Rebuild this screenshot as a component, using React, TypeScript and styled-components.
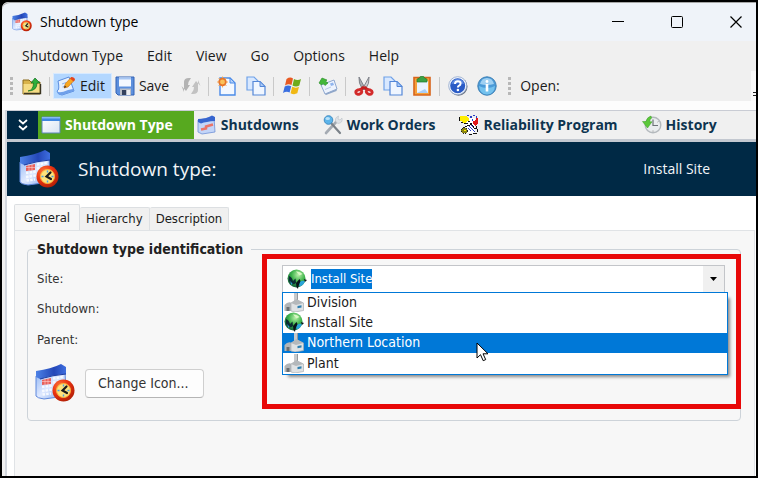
import React, { useEffect, useRef, useState } from "react";
import styled, { createGlobalStyle, css } from "styled-components";

const UI = `"Open Sans", "Noto Sans", sans-serif`;
const FORM = `"DejaVu Sans Condensed", "DejaVu Sans", sans-serif`;
const NAVY = "#002945";
const BLUE = "#0078d7";

const Global = createGlobalStyle`
  * { box-sizing: border-box; }
  body { margin: 0; background: #000; font: 14px/20px ${UI}; color: #1b1b1b; }
  button, input { font: inherit; color: inherit; }
  svg { display: block; flex: none; }
`;

/* ---------- icons ---------- */

type IconProps = { size?: number };

const CalendarClock = ({ size = 20 }: IconProps) => (
  <svg width={size} height={size} viewBox="0 0 40 40" aria-hidden="true">
    <defs>
      <linearGradient id="ccTop" x1="0" y1="0" x2="1" y2="0">
        <stop offset="0" stopColor="#4d82e6" />
        <stop offset="0.6" stopColor="#2447b8" />
        <stop offset="1" stopColor="#3f6fe0" />
      </linearGradient>
      <linearGradient id="ccPage" x1="0" y1="0" x2="1" y2="1">
        <stop offset="0" stopColor="#8fb4f2" />
        <stop offset="0.5" stopColor="#dfe9ff" />
        <stop offset="1" stopColor="#7ba4ec" />
      </linearGradient>
      <radialGradient id="ccRing" cx="0.35" cy="0.3" r="0.8">
        <stop offset="0" stopColor="#ff7a3c" />
        <stop offset="0.5" stopColor="#ea3210" />
        <stop offset="1" stopColor="#a81c04" />
      </radialGradient>
    </defs>
    <path d="M1 13 L30 8 L31 33 L9 36 Q2 35 1 33Z" fill="url(#ccPage)" stroke="#5f88dc" strokeWidth="1" />
    <path d="M1 8 Q16 6 26 1 L31 4 L31 11 Q16 12 5 16 L1 14Z" fill="url(#ccTop)" />
    <path d="M5 16 Q18 12 31 11" fill="none" stroke="#1c3ba0" strokeWidth="1" />
    <path d="M7 17 L16 15 L16 21 L7 22Z" fill="#e8605a" />
    <path d="M7 24 L18 22.500 M7 28 L17 26.500 M18 15.500 L28 14 M18 19.500 L28 18 M7.500 31.500 L16 30.500" stroke="#f6f9ff" strokeWidth="2.400" strokeDasharray="2.500 1.200" />
    <path d="M10 15 V22 M13 15 V22 M7 18.500 H16" stroke="#ffd2cf" strokeWidth="0.600" />
    <circle cx="28.500" cy="27.500" r="11" fill="url(#ccRing)" />
    <circle cx="28.500" cy="27.500" r="7" fill="#fde27c" stroke="#f9b23c" strokeWidth="1" />
    <path d="M28.500 21.500v2M28.500 31.500v2M22.500 27.500h2M32.500 27.500h2" stroke="#4a9ee0" strokeWidth="1.400" />
    <path d="M31.500 23.500 L27.500 27.500 L32 30" fill="none" stroke="#1a1a1a" strokeWidth="2.200" strokeLinecap="round" />
  </svg>
);

const FolderUp = () => (
  <svg width="20" height="20" viewBox="0 0 20 20" aria-hidden="true">
    <path d="M1 4h6l2 2h9v12H1z" fill="#d9b34a" stroke="#8a6a1c" />
    <path d="M1.500 8h16v9.500h-16z" fill="#f5dc84" />
    <path d="M2 17.500h16.500V8" fill="none" stroke="#3a3420" strokeWidth="1.400" />
    <path d="M6 15 Q11.500 14 11.500 7 H9 L13 2 L18 7 H15 Q15 15 6 15Z" fill="#2fae3c" stroke="#137020" strokeWidth="0.700" />
  </svg>
);

const EditPage = () => (
  <svg width="20" height="20" viewBox="0 0 20 20" aria-hidden="true">
    <path d="M2 5 L13 1 L18 15 L6 19 Q2 19 1 15 Q4 14 2 5Z" fill="#e6f0ff" stroke="#5b8ee0" />
    <path d="M1 15 Q3 18 12 14 L17 13 L18 15 L6 19 Q1 19 1 15Z" fill="#6fa0ea" />
    <path d="M6 8 L10 6.500M6.500 11 L9 10" stroke="#8fb3ea" />
    <path d="M8 12 L9.500 7.500 L15 1.500 L18.500 4 L12 11Z" fill="#f7a823" stroke="#c76a10" strokeWidth="0.600" />
    <path d="M14 2.500 L15.500 1 Q18.500 1 19 3.500 L17.500 5.500Z" fill="#e4451f" />
    <path d="M8 12 L8.800 9.500 L10.500 11Z" fill="#4a3018" />
  </svg>
);

const Floppy = () => (
  <svg width="20" height="20" viewBox="0 0 20 20" aria-hidden="true">
    <path d="M1 1h18v18H3l-2-2z" fill="#5c8fdd" stroke="#3263b5" />
    <path d="M4 1.500h12v9H4z" fill="#f4f8ff" />
    <path d="M4 1.500h12v2H4z" fill="#a9c7f2" />
    <path d="M5 12.500h11V19H5z" fill="#b9bec8" />
    <path d="M7 14h4v5H7z" fill="#33415e" />
    <path d="M12 14h3v5h-3z" fill="#eceef2" />
  </svg>
);

const Refresh = () => (
  <svg width="20" height="20" viewBox="0 0 20 20" aria-hidden="true" fill="#b3b3b3">
    <path d="M3 16 L3 6 Q3 2 8 2 L10 2 L7.500 6 L7 9 L9 9 L5 15 L0.500 10Z" />
    <path d="M17 4 L17 14 Q17 18 12 18 L10 18 L12.500 14 L13 11 L11 11 L15 5 L19.500 10Z" fill="#c2c2c2" />
  </svg>
);

const NewPage = () => (
  <svg width="20" height="20" viewBox="0 0 20 20" aria-hidden="true">
    <path d="M3 2h10l5 5v12H3z" fill="#f3f8ff" stroke="#4a8ae8" strokeWidth="1.400" />
    <path d="M13 2v5h5z" fill="#b5d2fa" stroke="#4a8ae8" />
    <path d="M5.500 0.500v11M0 6h11M1.500 2l8 8M9.500 2l-8 8" stroke="#f9b25b" strokeWidth="1" />
    <circle cx="5.500" cy="6" r="3.300" fill="#fbc25a" stroke="#e8762a" strokeWidth="1.700" />
  </svg>
);

const CopyPages = () => (
  <svg width="20" height="20" viewBox="0 0 20 20" aria-hidden="true">
    <path d="M1 1h7l4 4v9H1z" fill="#d8e8ff" stroke="#6fa1e8" strokeWidth="1.200" />
    <path d="M7 5.500h7l5 5V19H7z" fill="#f0f6ff" stroke="#5487d8" strokeWidth="1.200" />
    <path d="M14 5.500v5h5z" fill="#a9c9f7" stroke="#5487d8" />
  </svg>
);

const WindowsFlag = () => (
  <svg width="20" height="20" viewBox="0 0 20 20" aria-hidden="true">
    <path d="M4.500 3 Q8 0.500 11 2.500 L9.500 9 Q6.500 7.500 3 9.500Z" fill="#e85a22" />
    <path d="M12 3 Q15.500 5 19 3 L17.300 9.500 Q14 11.500 10.500 9.500Z" fill="#6fab1c" />
    <path d="M2.700 10.500 Q6 8.500 9.200 10.200 L7.600 16.500 Q4.500 15 1 17Z" fill="#3a6fe0" />
    <path d="M10.200 10.800 Q13.500 12.500 17 10.700 L15.300 17.300 Q12 19 8.600 17.200Z" fill="#f0b814" />
  </svg>
);

const SendCard = () => (
  <svg width="20" height="20" viewBox="0 0 20 20" aria-hidden="true">
    <path d="M3 9 L16 4 L19 13 L7 18Z" fill="#edf3fd" stroke="#8fa8d0" />
    <path d="M7 18 L19 13 L18.500 15 L8 19Z" fill="#8fa6c8" />
    <path d="M12 7.500l3-1 1 2.500-3 1z" fill="#8fb4ee" />
    <path d="M7 13.500 L13 11" stroke="#b7c9e6" />
    <path d="M1 7 L4 2 L9 4 L7.500 5.200 L10 7 L7 9.500 L5 7.500 L3.500 9Z" fill="#43b83a" stroke="#248a24" strokeWidth="0.600" />
  </svg>
);

const Scissors = () => (
  <svg width="20" height="20" viewBox="0 0 20 20" aria-hidden="true">
    <path d="M5 1 L11 12 L9 14 Q4 7 5 1Z" fill="#a9acb2" stroke="#777b82" strokeWidth="0.900" />
    <path d="M15 1 L9 12 L11 14 Q16 7 15 1Z" fill="#cfd1d5" stroke="#777b82" strokeWidth="0.900" />
    <path d="M10 11 L6 14M10 11 L14 14" stroke="#c41f1f" strokeWidth="3" />
    <g fill="#f7dada" stroke="#d22a2a" strokeWidth="2.800">
      <ellipse cx="4.800" cy="16" rx="3" ry="2.200" transform="rotate(-20 4.800 16)" />
      <ellipse cx="15.200" cy="16" rx="3" ry="2.200" transform="rotate(20 15.200 16)" />
    </g>
  </svg>
);

const Clipboard = () => (
  <svg width="20" height="20" viewBox="0 0 20 20" aria-hidden="true">
    <path d="M2 1.500h16V19H2z" fill="#f6a13a" stroke="#d8641c" strokeWidth="1.600" />
    <path d="M5 5h11v12H5z" fill="#eaf3ff" />
    <path d="M5 17h11l-3-4z" fill="#a9cdf6" />
    <path d="M5 6V3.500Q5 2.500 7 2.500Q8 0 10 0Q12 0 13 2.500Q15 2.500 15 3.500V6z" fill="#3aa244" stroke="#1f7a2b" strokeWidth="0.700" />
  </svg>
);

const HelpBall = () => (
  <svg width="20" height="20" viewBox="0 0 20 20" aria-hidden="true">
    <circle cx="10.500" cy="10.700" r="9" fill="#6c7480" />
    <circle cx="9.700" cy="9.700" r="9" fill="#f5f8fd" stroke="#8ea4cc" strokeWidth="0.800" />
    <circle cx="9.700" cy="9.700" r="7.500" fill="#2a5bc6" />
    <path d="M3.500 8 Q5 3 9.700 3 Q14.500 3 16 8 Q10 6.500 3.500 8Z" fill="#5d8ae2" />
    <path d="M7 8 Q7 5.200 9.800 5.200 Q12.600 5.200 12.600 7.500 Q12.600 9 10.800 9.800 Q9.900 10.300 9.900 11.600" fill="none" stroke="#fff" strokeWidth="2" />
    <circle cx="9.900" cy="14" r="1.300" fill="#fff" />
  </svg>
);

const InfoBall = () => (
  <svg width="20" height="20" viewBox="0 0 20 20" aria-hidden="true">
    <circle cx="10" cy="10" r="9.200" fill="#4a9ad8" stroke="#3c7fb4" />
    <path d="M2 10 Q10 14 18 10 Q17 18.500 10 18.500 Q3 18.500 2 10Z" fill="#74c2ee" />
    <path d="M3 8 Q4.500 2 10 2 Q15.500 2 17 8 Q10 10 3 8Z" fill="#9fd0f2" />
    <circle cx="10" cy="5.500" r="1.400" fill="#fff" />
    <path d="M8.700 8h2.600v7.500H8.700z" fill="#fff" />
  </svg>
);

const WindowPane = () => (
  <svg width="20" height="20" viewBox="0 0 20 20" aria-hidden="true">
    <defs>
      <linearGradient id="pane" x1="0" y1="0" x2="1" y2="1">
        <stop offset="0" stopColor="#fff" />
        <stop offset="1" stopColor="#d8e3f3" />
      </linearGradient>
    </defs>
    <path d="M1 2h18v16H1z" fill="url(#pane)" stroke="#5e86b8" />
    <path d="M1 2h18v4H1z" fill="#3f86e0" />
    <path d="M1 2h18v1.500H1z" fill="#86b8f4" />
  </svg>
);

const CalendarTilt = () => (
  <svg width="20" height="20" viewBox="0 0 20 20" aria-hidden="true">
    <path d="M1 5 L17 2 L18 17 L5 19 L1 17Z" fill="#c3d5f8" stroke="#6d8fd6" strokeWidth="0.800" />
    <path d="M1 4 Q9 4 15 0.500 L18 2 V6 Q9 6.500 4 8.500 L1 7Z" fill="#3765cf" />
    <path d="M4 14.500 L9 13.500 L9 11.500 L16 9.500" fill="none" stroke="#ea7468" strokeWidth="2.500" />
  </svg>
);

const Tools = () => (
  <svg width="20" height="20" viewBox="0 0 20 20" aria-hidden="true">
    <path d="M3 18 L14 6" stroke="#a5abb3" strokeWidth="2.600" strokeLinecap="round" />
    <path d="M13 7 Q11 3 15.500 1 L15 4 L17 5 L19 3 Q20 8 15 8.500Z" fill="#dfe2e6" stroke="#bcc1c8" strokeWidth="0.600" />
    <path d="M8 8 L17 18" stroke="#7b8289" strokeWidth="2.200" strokeLinecap="round" />
    <circle cx="5.500" cy="5" r="4.300" fill="#5cb4ea" stroke="#3a86bd" strokeWidth="0.900" />
    <ellipse cx="4.700" cy="3.600" rx="2.300" ry="1.500" fill="#b9e2fa" />
  </svg>
);

const Gears = () => (
  <svg width="20" height="20" viewBox="0 0 20 20" aria-hidden="true" shapeRendering="crispEdges">
    <path d="M7 3h9v15H7z" fill="#fff" />
    <path d="M1 1h6l2 2h1v3H8L7 8H3V6H1z" fill="#ffee00" />
    <path d="M0 2h1v4H0zM2 7h2v1H2zM5 8h4v1H5zM9 6h2v1H9zM11 8h2v2h-2zM8 10h3v1H8zM6 11h2v1H6zM14 18h4v1h-4zM10 19h3v1h-3zM17 11h1v3h-1zM18 14h1v3h-1z" fill="#111" />
    <path d="M8 0h2v1H8zM11 1h2v2h-2zM14 0h2v1h-2zM13 4h1v2h-1zM17 1h1v2h-1z" fill="#2a3fc4" />
    <path d="M14 6h2V5h1V3h2v5l-2 3h-1l-2-2z" fill="#e01818" />
    <path d="M10 11l6 6M12 10l4 4M9 13l3 3" stroke="#2a3fc4" />
    <path d="M13 10l5 6" stroke="#111" strokeDasharray="1 1" />
    <circle cx="5.500" cy="15.500" r="3" fill="#8a8410" stroke="#222" strokeDasharray="1.500 1" />
    <path d="M5 15h2v1H5z" fill="#ffee00" />
  </svg>
);

const History = () => (
  <svg width="20" height="20" viewBox="0 0 20 20" aria-hidden="true">
    <circle cx="11" cy="10" r="7.800" fill="#e9ecee" stroke="#b4b9bd" strokeWidth="1.400" />
    <path d="M11 4.500V10.500H16" fill="none" stroke="#6d7378" strokeWidth="1.200" />
    <path d="M11 15.500v1.200M16.500 6.500l-1 .6" stroke="#999" />
    <path d="M9 1 Q5 2 4 6.500 H0.500 L5.500 13 L10 6.800 H7.500 Q8 4 9.500 3Z" fill="#5cc83a" stroke="#3b9c25" strokeWidth="0.500" />
  </svg>
);

const Globe = () => (
  <svg width="20" height="20" viewBox="0 0 20 20" aria-hidden="true">
    <defs>
      <radialGradient id="globe" cx="0.60" cy="0.3" r="0.75">
        <stop offset="0" stopColor="#b7f0a8" />
        <stop offset="0.500" stopColor="#3cb24a" />
        <stop offset="1" stopColor="#0f5a3a" />
      </radialGradient>
    </defs>
    <circle cx="9.500" cy="9.500" r="9" fill="url(#globe)" />
    <path d="M2 7 Q5 8 6 12 L8.500 9.500 L9 14 Q6 16.500 3 14 Q1 11 2 7Z" fill="#0b2c33" />
    <path d="M3 12 L5.500 14.500 L4.500 16Z M12 14 Q14 11 18 12 Q16.500 16.500 12.500 17.500Z" fill="#2aa4d8" />
    <path d="M9 14 L12.500 10 L13.500 12 L11.500 17 L11 20 L9.500 18Z M17 10l3 1-2 2z" fill="#08131a" />
    <path d="M9 2.500 Q13 2 15.500 5 L12.500 6.500Z" fill="#d8f8c4" />
  </svg>
);

const Plant = () => (
  <svg width="20" height="20" viewBox="0 0 20 20" aria-hidden="true">
    <path d="M10 1h4v9h-4z" fill="#c6c9cc" />
    <path d="M13 1h1v9h-1z" fill="#94989c" />
    <path d="M0.500 13 Q4 9 8 11 L8 19 H0.500Z" fill="#b1b5b8" />
    <path d="M7 11 L12.500 7.500 L19.500 11 V18.500 L11 20 L7 19Z" fill="#dfe2e4" stroke="#a9adb1" strokeWidth="0.700" />
    <path d="M7 11 L12.500 7.500 L19.500 11 L12 13Z" fill="#b4b8bb" />
    <path d="M2.500 15h3v4h-3z" fill="#6a6e72" />
    <path d="M13.500 14l4-.8v2.300l-4 .7z" fill="#2d7fb0" />
  </svg>
);

const Chevrons = () => (
  <svg width="12" height="14" viewBox="0 0 12 14" fill="none" stroke="#fff" strokeWidth="1.700" aria-hidden="true">
    <path d="M2 2l4 3.500L10 2M2 8l4 3.500L10 8" />
  </svg>
);

const Pointer = styled.svg`
  position: absolute;
  left: 193px;
  top: 49px;
`;

/* ---------- window chrome ---------- */

const Frame = styled.main`
  min-height: 100vh;
  display: flex;
  flex-direction: column;
  border: 2px solid #000;
  background: #f0f0f0;
  border-top-left-radius: 8px;
`;

const TitleBar = styled.header`
  display: flex;
  align-items: center;
  gap: 8px;
  height: 39px;
  padding-left: 10px;
  border-top: 1px solid #a6a6a6;
  border-top-left-radius: 8px;
  background: #eff3f9;
  color: #000;
`;

const Title = styled.h1`
  flex: 1;
  margin: 0;
  font-size: 14px;
  font-weight: 400;
`;

const CaptionButtons = styled.div`
  display: flex;
`;

const CaptionButton = styled.button`
  width: 59px;
  height: 38px;
  padding: 0;
  border: 0;
  background: none;
  display: grid;
  place-items: center;
  &:last-child { width: 50px; padding-left: 10px; }
`;

const MenuBar = styled.nav`
  display: flex;
  align-items: center;
  gap: 24px;
  height: 30px;
  padding: 0 20px;
`;

const MenuItem = styled.button`
  padding: 0;
  border: 0;
  background: none;
`;

const ToolBar = styled.div`
  display: flex;
  align-items: center;
  height: 39px;
  padding-left: 8px;
  border-bottom: 9px solid #fdfdfd;
`;

const Grip = styled.span<{ $inner?: boolean }>`
  width: 3px;
  height: 18px;
  margin-left: ${(p) => (p.$inner ? "7px" : "0")};
  margin-right: 4px;
  background: repeating-linear-gradient(#b8b8b8 0 3px, transparent 3px 5px);
`;

const Divider = styled.span`
  width: 1px;
  height: 19px;
  margin: 0 3px;
  background: #c9c9c9;
`;

const Tool = styled.button<{ $active?: boolean; $wide?: boolean }>`
  display: flex;
  align-items: center;
  justify-content: center;
  gap: 4px;
  width: ${(p) => (p.$wide ? "auto" : "29px")};
  height: 26px;
  padding: ${(p) => (p.$wide ? "0 6px 0 2px" : "0")};
  border: 1px solid transparent;
  background: none;
  ${(p) => p.$active && css`
    background: #b3d7ff;
    border-color: #d8eaff;
  `}
`;

const OpenLabel = styled.span`
  padding: 0 5px;
`;

const Overflow = styled.button`
  align-self: stretch;
  display: flex;
  align-items: flex-end;
  width: 5px;
  margin-left: auto;
  padding: 0 0 3px 2px;
  border: 0;
  background: #fafafa;
`;

const Workspace = styled.div`
  flex: 1;
  display: flex;
  flex-direction: column;
  margin-left: 3px;
  border-left: 2px solid #d3d7de;
  background: #fff;
`;

/* ---------- section navigation ---------- */

const SectionBar = styled.nav`
  display: flex;
  height: 32px;
  border-top: 1px solid #c9ccd4;
  border-bottom: 3px solid #c3c8d0;
  background: #f0f0f0;
`;

const Collapse = styled.button`
  width: 31px;
  padding: 0;
  border: 0;
  background: ${NAVY};
  display: grid;
  place-items: center;
`;

const Section = styled.a<{ $active?: boolean }>`
  display: flex;
  align-items: center;
  gap: 4px;
  padding: 0 21px 0 3px;
  font-weight: 700;
  text-decoration: none;
  white-space: nowrap;
  color: ${(p) => (p.$active ? "#fff" : "#0d3450")};
  background: ${(p) => (p.$active ? "#57a91f" : "transparent")};
`;

const Banner = styled.section`
  display: flex;
  align-items: center;
  height: 54px;
  padding: 0 46px 0 12px;
  background: ${NAVY};
  color: #f2f5f8;
  h2 {
    flex: 1;
    margin: 0 0 0 19px;
    font-size: 19px;
    font-weight: 400;
    line-height: 26px;
  }
`;

/* ---------- form ---------- */

const Tabs = styled.div`
  display: flex;
  align-items: flex-end;
  height: 34px;
  padding: 8px 0 0 7px;
  font-family: ${FORM};
  font-size: 13px;
`;

const Tab = styled.button<{ $active?: boolean }>`
  height: ${(p) => (p.$active ? "26px" : "23px")};
  padding: 0 ${(p) => (p.$active ? "9px" : "6px")};
  border: 1px solid #dcdfe2;
  border-bottom: 0;
  border-left-width: ${(p) => (p.$active ? "1px" : "0")};
  border-radius: 2px 2px 0 0;
  background: ${(p) => (p.$active ? "#f7f7f7" : "#f0f0f0")};
`;

const TabPage = styled.section`
  flex: 1;
  margin: 0 1px 0 7px;
  padding: 8px 13px 16px 12px;
  border: 1px solid #e0e3e6;
  border-bottom: 0;
  background: #f7f7f7;
  font-family: ${FORM};
  font-size: 13px;
`;

const Group = styled.fieldset`
  min-width: 0;
  margin: 0;
  padding: 6px 15px 17px 9px;
  border: 1px solid #cdd3d9;
  border-radius: 4px;
`;

const Legend = styled.legend`
  padding: 0 8px 0 0;
  font-size: 14px;
  font-weight: 700;
  line-height: 20px;
  color: #222;
`;

const Row = styled.div`
  display: grid;
  grid-template-columns: 245px 1fr;
  align-items: center;
  min-height: 31px;
  color: #333;
  &:first-of-type { min-height: 28px; }
`;

const Combo = styled.div`
  position: relative;
`;

const ComboField = styled.div`
  display: flex;
  align-items: center;
  height: 28px;
  padding-left: 4px;
  border: 1px solid #c3c5c9;
  background: #fff;
`;

const ComboInput = styled.input`
  flex: 1;
  min-width: 0;
  height: 20px;
  margin-left: 4px;
  padding: 0;
  border: 0;
  outline: 0;
  background: none;
  &::selection { background: ${BLUE}; color: #fff; }
`;

const DropButton = styled.button`
  width: 21px;
  height: 26px;
  padding: 0;
  border: 0;
  background: #f0f0f0;
  display: grid;
  place-items: center;
`;

const List = styled.ul`
  position: absolute;
  z-index: 2;
  left: 0;
  right: -3px;
  top: 27px;
  margin: 0;
  padding: 0;
  list-style: none;
  border: 1px solid ${BLUE};
  background: #fff;
  box-shadow: 4px 4px 3px -2px #8a8a8a;
  font-size: 14px;
  color: #1b1b1b;
`;

const Option = styled.li<{ $active: boolean }>`
  display: flex;
  align-items: center;
  gap: 3px;
  height: 20px;
  padding: 0 0 2px 1px;
  background: ${(p) => (p.$active ? BLUE : "transparent")};
  color: ${(p) => (p.$active ? "#fff" : "inherit")};
  &:last-of-type { height: 21px; }
`;

const Callout = styled.div`
  position: absolute;
  z-index: 1;
  left: -20px;
  right: -16px;
  top: -11px;
  height: 155px;
  border: 5px solid #e80808;
  pointer-events: none;
`;

const IconRow = styled.div`
  display: flex;
  align-items: center;
  gap: 10px;
  padding-top: 8px;
  margin-left: -2px;
`;

const PushButton = styled.button`
  height: 29px;
  padding: 0 14px 0 12px;
  border: 1px solid #cfcfcf;
  border-bottom-color: #b5b5b5;
  border-radius: 4px;
  background: #fdfdfd;
  font-size: 14px;
  color: #333;
`;

const menus = ["Shutdown Type", "Edit", "View", "Go", "Options", "Help"];

const sections = [
  { name: "Shutdown Type", icon: <WindowPane /> },
  { name: "Shutdowns", icon: <CalendarTilt /> },
  { name: "Work Orders", icon: <Tools /> },
  { name: "Reliability Program", icon: <Gears /> },
  { name: "History", icon: <History /> },
];

const sites = [
  { name: "Division", icon: <Plant /> },
  { name: "Install Site", icon: <Globe /> },
  { name: "Northern Location", icon: <Plant /> },
  { name: "Plant", icon: <Plant /> },
];

function SiteCombo() {
  const field = useRef<HTMLInputElement>(null);
  const [value, setValue] = useState("Install Site");
  const [hover, setHover] = useState("Northern Location");

  useEffect(() => {
    field.current?.focus();
    field.current?.select();
  }, []);

  return (
    <Combo>
      <ComboField>
        <Globe />
        <ComboInput
          id="site"
          ref={field}
          role="combobox"
          aria-expanded="true"
          aria-controls="site-list"
          value={value}
          onChange={(e) => setValue(e.target.value)}
        />
        <DropButton type="button" aria-label="Show sites">
          <svg width="7" height="4" viewBox="0 0 7 4" aria-hidden="true"><path d="M0 0h7L3.500 4z" fill="#000" /></svg>
        </DropButton>
      </ComboField>
      <List id="site-list" role="listbox" aria-label="Site">
        {sites.map((s) => (
          <Option
            key={s.name}
            role="option"
            aria-selected={s.name === value}
            $active={s.name === hover}
            onMouseEnter={() => setHover(s.name)}
            onClick={() => setValue(s.name)}
          >
            {s.icon}
            {s.name}
          </Option>
        ))}
        <Pointer width="13" height="20" viewBox="0 0 13 20" aria-hidden="true">
          <path d="M1 1v15l3.500-3.300 2.700 6 2.500-1.100-2.700-5.800H12z" fill="#fff" stroke="#000" />
        </Pointer>
      </List>
      <Callout />
    </Combo>
  );
}

export default function App() {
  return (
    <>
      <Global />
      <Frame>
        <TitleBar>
          <CalendarClock />
          <Title>Shutdown type</Title>
          <CaptionButtons>
            <CaptionButton aria-label="Minimize">
              <svg width="12" height="12" viewBox="0 0 12 12"><path d="M0 5.500h12" stroke="#000" /></svg>
            </CaptionButton>
            <CaptionButton aria-label="Maximize">
              <svg width="12" height="12" viewBox="0 0 12 12"><rect x="0.500" y="0.500" width="11" height="11" rx="1" fill="none" stroke="#000" /></svg>
            </CaptionButton>
            <CaptionButton aria-label="Close">
              <svg width="12" height="12" viewBox="0 0 12 12"><path d="M0.500 0.500l11 11M11.500 0.500l-11 11" stroke="#000" strokeWidth="1.200" /></svg>
            </CaptionButton>
          </CaptionButtons>
        </TitleBar>
        <MenuBar>
          {menus.map((m) => <MenuItem key={m}>{m}</MenuItem>)}
        </MenuBar>
        <ToolBar role="toolbar">
          <Grip />
          <Tool aria-label="Open parent"><FolderUp /></Tool>
          <Divider />
          <Tool $wide $active><EditPage />Edit</Tool>
          <Tool $wide><Floppy />Save</Tool>
          <Tool aria-label="Refresh" disabled><Refresh /></Tool>
          <Divider />
          <Tool aria-label="New"><NewPage /></Tool>
          <Tool aria-label="Duplicate"><CopyPages /></Tool>
          <Divider />
          <Tool aria-label="Windows"><WindowsFlag /></Tool>
          <Divider />
          <Tool aria-label="Send"><SendCard /></Tool>
          <Divider />
          <Tool aria-label="Cut"><Scissors /></Tool>
          <Tool aria-label="Copy"><CopyPages /></Tool>
          <Tool aria-label="Paste"><Clipboard /></Tool>
          <Divider />
          <Tool aria-label="Help"><HelpBall /></Tool>
          <Tool aria-label="About"><InfoBall /></Tool>
          <Grip $inner />
          <OpenLabel>Open:</OpenLabel>
          <Overflow aria-label="More buttons">
            <svg width="3" height="7" viewBox="0 0 3 7" aria-hidden="true"><path d="M0 1.500h3M0 4.500h3" stroke="#222" /></svg>
          </Overflow>
        </ToolBar>
        <Workspace>
          <SectionBar>
            <Collapse aria-label="Collapse"><Chevrons /></Collapse>
            {sections.map((s, i) => (
              <Section key={s.name} href="#" $active={i === 0}>{s.icon}{s.name}</Section>
            ))}
          </SectionBar>
          <Banner>
            <CalendarClock size={40} />
            <h2>Shutdown type:</h2>
            <span>Install Site</span>
          </Banner>
          <Tabs role="tablist">
            <Tab role="tab" aria-selected="true" $active>General</Tab>
            <Tab role="tab" aria-selected="false">Hierarchy</Tab>
            <Tab role="tab" aria-selected="false">Description</Tab>
          </Tabs>
          <TabPage role="tabpanel">
            <Group>
              <Legend>Shutdown type identification</Legend>
              <Row>
                <label htmlFor="site">Site:</label>
                <SiteCombo />
              </Row>
              <Row><span>Shutdown:</span></Row>
              <Row><span>Parent:</span></Row>
              <IconRow>
                <CalendarClock size={40} />
                <PushButton type="button">Change Icon...</PushButton>
              </IconRow>
            </Group>
          </TabPage>
        </Workspace>
      </Frame>
    </>
  );
}
